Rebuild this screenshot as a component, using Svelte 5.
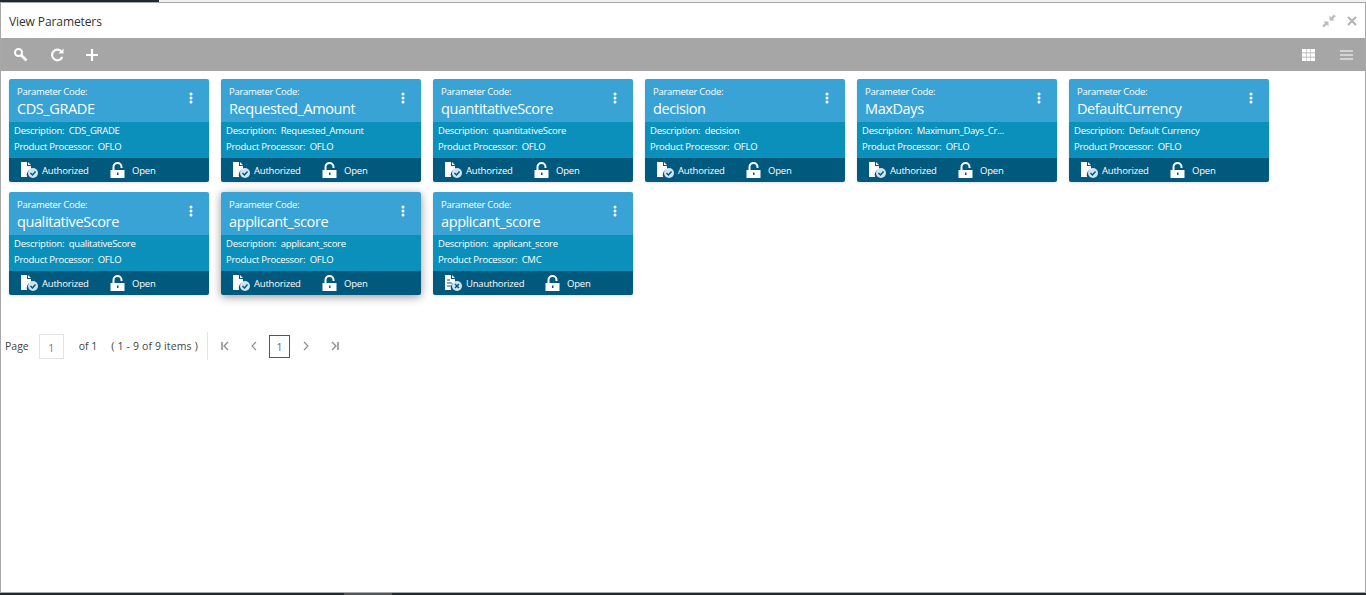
<script>
  const cards = [
    { code: 'CDS_GRADE', desc: 'CDS_GRADE', pp: 'OFLO', auth: true },
    { code: 'Requested_Amount', desc: 'Requested_Amount', pp: 'OFLO', auth: true },
    { code: 'quantitativeScore', desc: 'quantitativeScore', pp: 'OFLO', auth: true },
    { code: 'decision', desc: 'decision', pp: 'OFLO', auth: true },
    { code: 'MaxDays', desc: 'Maximum_Days_Cr...', pp: 'OFLO', auth: true },
    { code: 'DefaultCurrency', desc: 'Default Currency', pp: 'OFLO', auth: true },
    { code: 'qualitativeScore', desc: 'qualitativeScore', pp: 'OFLO', auth: true },
    { code: 'applicant_score', desc: 'applicant_score', pp: 'OFLO', auth: true, hover: true },
    { code: 'applicant_score', desc: 'applicant_score', pp: 'CMC', auth: false }
  ];
</script>

<div class="page">
  <div class="strip"><div class="strip-dark"></div></div>
  <div class="window">
    <header class="title">
      <span>View Parameters</span>
      <div class="win-actions">
        <svg width="16" height="16" viewBox="0 0 16 16"><path d="M8.500 7.500V2.500l1.800 1.800L13 1.500l1.800 1.800-2.800 2.700 1.800 1.500zM7.500 8.500v5l-1.800-1.800L3 14.500 1.200 12.700 4 10 2.200 8.500z" fill="#bdbdbd"/></svg>
        <svg width="12" height="12" viewBox="0 0 12 12"><path d="M2 2l8 8M10 2l-8 8" stroke="#b5b5b5" stroke-width="2.200" fill="none"/></svg>
      </div>
    </header>
    <div class="toolbar">
      <div class="tools">
        <svg width="16" height="16" viewBox="0 0 16 16"><circle cx="5.500" cy="5.500" r="3.500" stroke="#fff" stroke-width="2" fill="none"/><path d="M8 8l5.500 5.500" stroke="#fff" stroke-width="2.600"/></svg>
        <svg width="16" height="16" viewBox="0 0 16 16"><path d="M12.800 5A5.300 5.300 0 1 0 13.300 10" stroke="#fff" stroke-width="2.200" fill="none"/><path d="M9.500 6.500H14.500V1.500z" fill="#fff"/></svg>
        <svg width="16" height="16" viewBox="0 0 16 16"><path d="M8 2v12M2 8h12" stroke="#fff" stroke-width="2.200"/></svg>
      </div>
      <div class="views">
        <svg width="13" height="12" viewBox="0 0 13 12"><path d="M0 0h4v3.600H0zM4.500 0h4v3.600h-4zM9 0h4v3.600H9zM0 4.200h4v3.600H0zM4.500 4.200h4v3.600h-4zM9 4.200h4v3.600H9zM0 8.400h4V12H0zM4.500 8.400h4V12h-4zM9 8.400h4V12H9z" fill="#fff"/></svg>
        <svg width="13" height="10" viewBox="0 0 13 10"><path d="M0 1h13M0 5h13M0 9h13" stroke="#fff" stroke-width="1"/></svg>
      </div>
    </div>
    <main class="content">
      <div class="grid">
        {#each cards as c}
          <article class="card" class:hover={c.hover}>
            <div class="head">
              <div class="label">Parameter Code:</div>
              <div class="code">{c.code}</div>
              <svg class="kebab" width="4" height="12" viewBox="0 0 4 12"><circle cx="2" cy="2" r="1.500" fill="#fff"/><circle cx="2" cy="6" r="1.500" fill="#fff"/><circle cx="2" cy="10" r="1.500" fill="#fff"/></svg>
            </div>
            <div class="mid">
              <div>Description:&nbsp; {c.desc}</div>
              <div>Product Processor:&nbsp; {c.pp}</div>
            </div>
            <div class="foot">
              <span class="stat" class:un={!c.auth}>
                {#if c.auth}
                  <svg width="20" height="18" viewBox="0 0 20 18"><path d="M1 1h6v4h4v3.200a5.800 5.800 0 0 0-3.800 7.800H1zM8 1l3 3H8z" fill="#fff"/><circle cx="13" cy="12" r="5" fill="#cfe4ee"/><path d="M10.500 12l2 2 3-3.500" stroke="#02597e" stroke-width="1.500" fill="none"/></svg>
                {:else}
                  <svg width="20" height="18" viewBox="0 0 20 18"><path d="M1 1h6v4h4v3.200a5.800 5.800 0 0 0-3.800 7.800H1zM8 1l3 3H8z" fill="#fff"/><path d="M3 6h3M3 9h5M3 12h4" stroke="#02597e" stroke-width="1.100"/><circle cx="13" cy="12" r="5" fill="#cfe4ee"/><path d="M11 10l4 4M15 10l-4 4" stroke="#02597e" stroke-width="1.500"/></svg>
                {/if}
                {c.auth ? 'Authorized' : 'Unauthorized'}
              </span>
              <span class="open">
                <svg width="15" height="16" viewBox="0 0 15 16"><path d="M3.500 8V5a4 4 0 0 1 8 0v1" stroke="#fff" stroke-width="2" fill="none"/><path d="M0.500 8h14v8h-14z" fill="#fff"/><path d="M7 10.500h1.500v2.500H7z" fill="#02597e"/></svg>
                Open
              </span>
            </div>
          </article>
        {/each}
      </div>
      <nav class="pager">
        <span class="page-label">Page</span>
        <span class="page-input">1</span>
        <span class="of">of 1</span>
        <span class="items">( 1 - 9 of 9 items )</span>
        <span class="sep"></span>
        <svg class="first" width="10" height="10" viewBox="0 0 10 10"><path d="M2 1v8" stroke="#8a8a8a" stroke-width="1.500" fill="none"/><path d="M8 1L4 5l4 4" stroke="#8a8a8a" stroke-width="1.300" fill="none"/></svg>
        <svg class="prev" width="8" height="10" viewBox="0 0 8 10"><path d="M6 1L2 5l4 4" stroke="#8a8a8a" stroke-width="1.100" fill="none"/></svg>
        <span class="current">1</span>
        <svg class="next" width="8" height="10" viewBox="0 0 8 10"><path d="M2 1l4 4-4 4" stroke="#8a8a8a" stroke-width="1.100" fill="none"/></svg>
        <svg class="last" width="10" height="10" viewBox="0 0 10 10"><path d="M8 1v8" stroke="#8a8a8a" stroke-width="1.500" fill="none"/><path d="M2 1l4 4-4 4" stroke="#8a8a8a" stroke-width="1.300" fill="none"/></svg>
      </nav>
    </main>
  </div>
  <div class="taskbar"><div class="thumb"></div></div>
</div>

<style>
  :global(body) { margin: 0; background: #fff; }
  .page {
    width: 1366px; height: 595px; display: flex; flex-direction: column;
    font-family: "Open Sans", "Noto Sans", sans-serif; overflow: hidden; color: #333;
  }
  .strip { height: 2px; background: #f1f1f1; flex: none; }
  .strip-dark { width: 159px; height: 3px; background: #212a31; }
  .window {
    flex: 1; min-height: 0; display: flex; flex-direction: column;
    border: 1px solid #a8a8a8; background: #fff;
  }
  .title {
    height: 35px; flex: none; display: flex; align-items: center; justify-content: space-between;
    padding: 2px 7px 0 8px; font-size: 12px; letter-spacing: -0.1px; color: #333; box-sizing: border-box;
  }
  .win-actions { display: flex; align-items: center; gap: 9px; margin-top: -2px; }
  .toolbar {
    height: 33px; flex: none; background: #a6a6a6; display: flex; align-items: center;
    justify-content: space-between; padding: 0 12px;
  }
  .tools { display: flex; align-items: center; gap: 19.500px; }
  .views { display: flex; align-items: center; gap: 25px; }
  .content { flex: 1; padding: 8px 0 0 8px; }
  .grid { display: grid; grid-template-columns: repeat(6, 200px); grid-auto-rows: 103px; gap: 10px 12px; }
  .card {
    border-radius: 2px; overflow: hidden; display: flex; flex-direction: column; color: #fff;
    box-shadow: 0 1px 3px rgba(0,0,0,.12);
  }
  .card.hover { box-shadow: 0 2px 10px rgba(0,0,0,.4); }
  .head { position: relative; height: 43px; background: #38a3d4; padding: 7px 8px 0; box-sizing: border-box; }
  .label { font-size: 9.500px; line-height: 12px; letter-spacing: -0.3px; }
  .code { font-size: 14.500px; line-height: 20px; margin-top: 1px; letter-spacing: -0.4px; white-space: nowrap; }
  .kebab { position: absolute; right: 16px; top: 13px; }
  .mid {
    height: 36px; background: #0b8fbb; padding: 1px 5px 0; box-sizing: border-box;
    font-size: 9.500px; line-height: 16px; letter-spacing: -0.25px; white-space: nowrap;
  }
  .foot {
    height: 24px; background: #02597e; display: flex; align-items: center; padding-left: 11px;
    font-size: 9.500px; letter-spacing: -0.2px;
  }
  .stat { display: flex; align-items: center; width: 90px; flex: none; gap: 2px; }
  .stat.un { width: 101px; }
  .open { display: flex; align-items: center; gap: 7px; }
  .pager {
    display: flex; align-items: center; margin: 37px 0 0 -4px; height: 28px;
    font-size: 10.500px; color: #444;
  }
  .page-input {
    width: 25px; height: 25px; border: 1px solid #e3e3e3; box-sizing: border-box; margin-left: 10px;
    display: flex; align-items: center; justify-content: center; color: #777; padding-top: 3px;
  }
  .of { margin-left: 15px; }
  .items { margin-left: 14px; letter-spacing: 0.15px; }
  .sep { width: 1px; height: 28px; background: #e4e4e4; margin: 0 12px 0 9px; }
  .prev { margin-left: 20px; margin-right: 11px; }
  .current {
    width: 21px; height: 23px; border: 1px solid #555; box-sizing: border-box;
    display: flex; align-items: center; justify-content: center; color: #666; padding-top: 2px;
  }
  .next { margin-left: 12px; margin-right: 20px; }
  .taskbar { height: 2px; flex: none; background: #212a31; position: relative; }
  .thumb { position: absolute; left: 344px; width: 48px; height: 2px; background: #50565b; }
</style>
